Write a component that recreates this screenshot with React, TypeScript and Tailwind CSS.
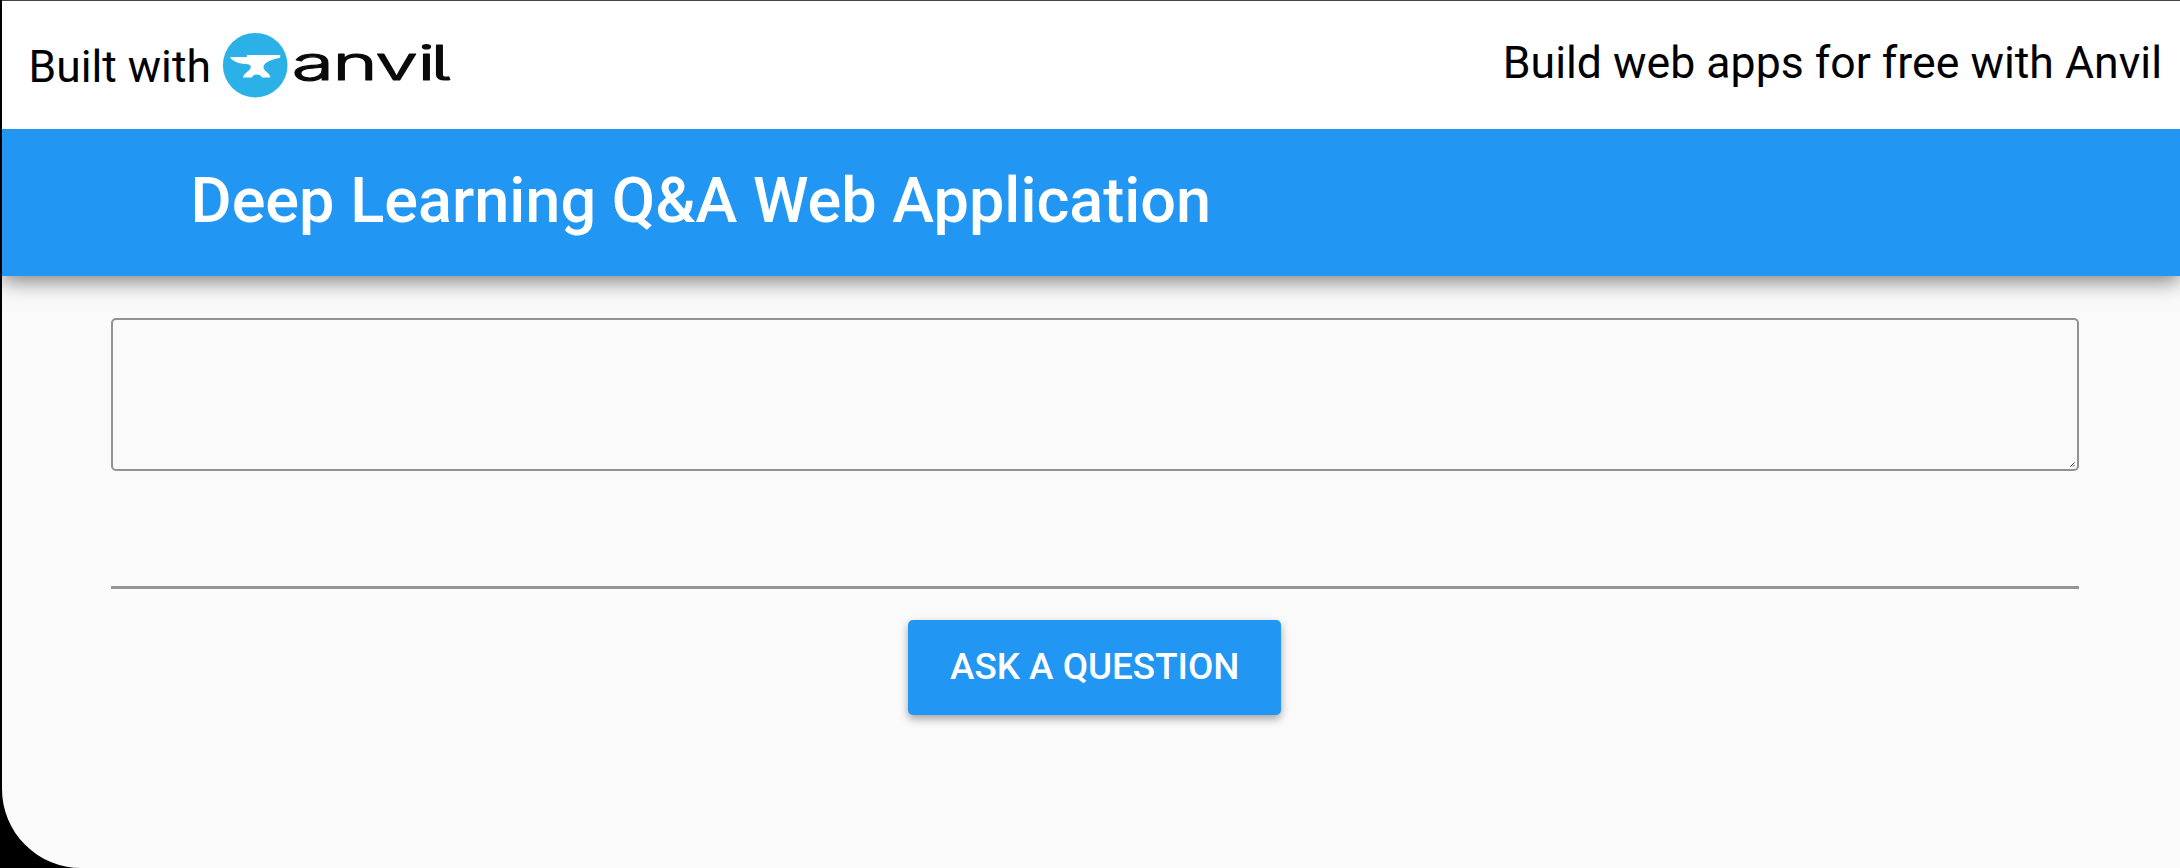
import React from "react";

function AnvilLogo() {
  return (
    <svg
      className="ml-[10px] h-[68px] w-[232px] shrink-0"
      viewBox="221 31 232 68"
      role="img"
      aria-label="anvil"
    >
      <circle cx="255.2" cy="65.2" r="32.3" fill="#2bb0e8" />
      <path
        d="M230 57 L247 57 L247 55 L280.2 55 L280.2 57.8 C270 60 264 62.5 263.5 67 C263.3 71 270 72.5 270.5 77.6 L262 77.6 C261.5 75.5 259 74.6 256.8 74.6 C254.5 74.6 252.2 75.5 251.8 77.6 L243 77.6 C243.5 72.5 250.5 71.5 250.8 67 C250.9 65 249 64.2 245.5 64 C238 63.6 232 61 230 57 Z"
        fill="#ffffff"
      />
      <g transform="translate(0 80) scale(1.6 1)">
        <text
          x="182.4 207.9 234.6 260.9 269"
          y="0"
          className="font-[Inter,sans-serif] text-[48px] font-light [font-feature-settings:'cv05','ss02']"
          fill="#0a0a0a"
          stroke="#0a0a0a"
          strokeWidth="1.2"
          strokeLinejoin="round"
        >
          anvil
        </text>
      </g>
    </svg>
  );
}

export default function App() {
  return (
    <div className="h-[868px] w-full overflow-hidden bg-black pl-[1.5px] font-[Roboto,sans-serif]">
      <div className="flex h-full flex-col overflow-hidden rounded-bl-[79px] bg-[#fafafa]">
        <div className="relative z-10 flex h-[129px] shrink-0 items-start justify-between border-t border-[#444444] bg-white pr-[18px] pl-[27px] text-black">
          <div className="flex items-start pt-[30px]">
            <span className="pt-[2px] text-[44.4px] leading-[68px]">Built with</span>
            <AnvilLogo />
          </div>
          <a className="pt-[28px] text-[44.6px] leading-[68px] whitespace-nowrap">
            Build web apps for free with Anvil
          </a>
        </div>

        <header className="flex h-[147px] shrink-0 items-center bg-[#2196f3] pb-[3px] pl-[189px] shadow-[0_5px_20px_rgba(0,0,0,0.5)]">
          <h1 className="text-[63px] leading-[72px] font-medium whitespace-nowrap text-white">
            Deep Learning Q&amp;A Web Application
          </h1>
        </header>

        <main className="flex flex-col items-center pr-[101px] pl-[109px] pt-[42px]">
          <div className="relative h-[153px] w-full">
            <textarea className="block h-full w-full resize-none rounded-[5px] border-2 border-[#929292] bg-transparent outline-none" />
            <svg className="absolute right-[4px] bottom-[4px] h-[5px] w-[5px]" viewBox="0 0 5 5">
              <path d="M0.5 4.5 L4.5 0.5 M3 4.5 L4.5 3" stroke="#444444" strokeWidth="1" />
            </svg>
          </div>
          <div className="mt-[115px] h-[3px] w-full bg-[#959595]" />
          <button className="mt-[31px] h-[95px] w-[373px] rounded-[5px] bg-[#2196f3] pb-[2px] text-[36.8px] font-medium text-white uppercase shadow-[0_4px_8px_rgba(0,0,0,0.35)]">
            Ask a question
          </button>
        </main>
      </div>
    </div>
  );
}
